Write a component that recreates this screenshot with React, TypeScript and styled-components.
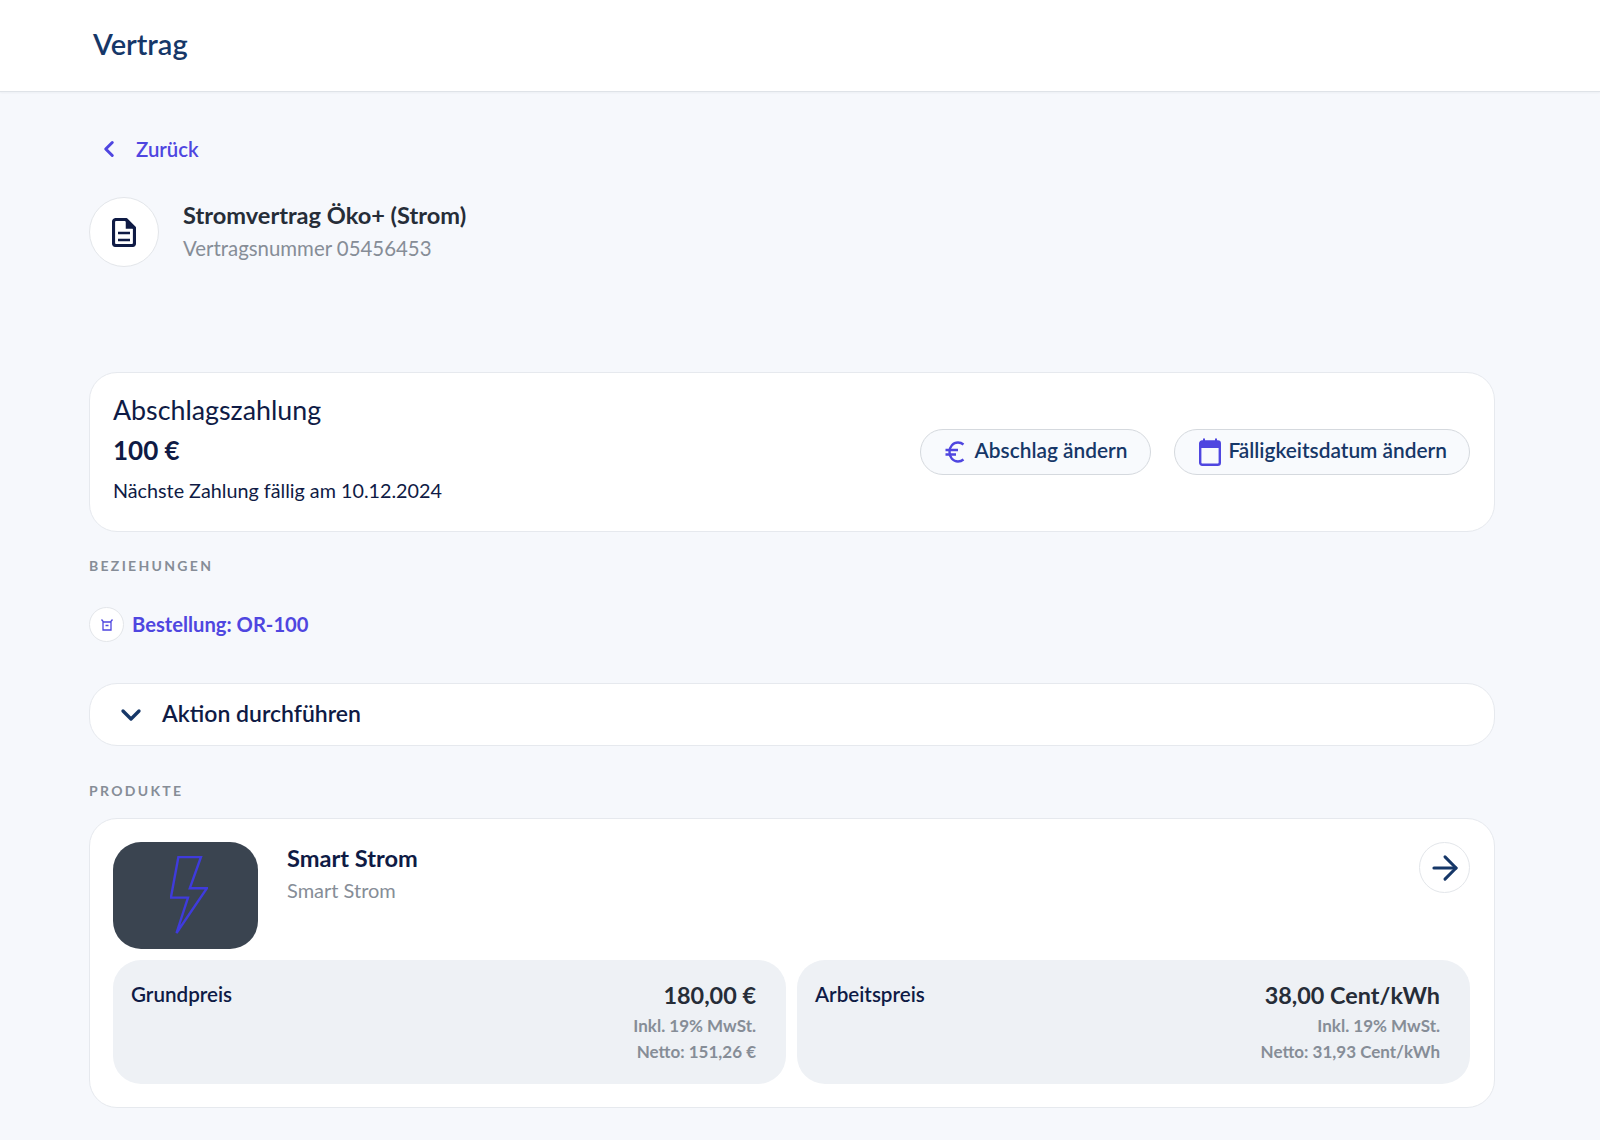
import React from 'react';
import styled, { createGlobalStyle } from 'styled-components';
import { ChevronLeft, ChevronDown, ArrowRight } from 'lucide-react';

const GlobalStyle = createGlobalStyle`
  html, body {
    margin: 0;
    padding: 0;
    background: #f6f8fc;
    font-family: "Lato", "Liberation Sans", sans-serif;
    color: #0f1b45;
  }
`;

const Header = styled.header`
  height: 92px;
  box-sizing: border-box;
  background: #fff;
  border-bottom: 1px solid #dfe3e8;
  box-shadow: 0 1px 2px rgba(30, 50, 80, 0.05);
  padding: 0 0 4px 93px;
  display: flex;
  align-items: center;
`;

const PageTitle = styled.h1`
  margin: 0;
  font-size: 29px;
  font-weight: 600;
  color: #163768;
`;

const Main = styled.main`
  padding: 0 105px 0 89px;
  display: flex;
  flex-direction: column;
`;

const BackLink = styled.a`
  display: flex;
  align-items: center;
  gap: 14px;
  height: 24px;
  margin: 45px 0 0 7px;
  font-size: 20.4px;
  font-weight: 600;
  color: #4f46e0;
`;

const ContractRow = styled.div`
  display: flex;
  gap: 24px;
  margin-top: 36px;
  height: 175px;
`;

const Circle = styled.div<{ $size: number }>`
  width: ${(p) => p.$size}px;
  height: ${(p) => p.$size}px;
  flex: none;
  box-sizing: border-box;
  border-radius: 50%;
  background: #fff;
  border: 1px solid #e3e6ea;
  display: flex;
  align-items: center;
  justify-content: center;
`;

const ContractText = styled.div`
  display: flex;
  flex-direction: column;
  gap: 5px;
  padding-top: 3px;
`;

const ContractName = styled.div`
  font-size: 23.6px;
  font-weight: 700;
  line-height: 30px;
  color: #262d38;
`;

const Muted = styled.div`
  font-size: 20.4px;
  line-height: 26px;
  color: #868d97;
`;

const ProductSub = styled(Muted)`
  font-size: 20px;
`;

const Card = styled.section`
  box-sizing: border-box;
  background: #fff;
  border: 1px solid #e6e9ee;
  border-radius: 28px;
`;

const PaymentCard = styled(Card)`
  height: 160px;
  padding: 0 24px 0 23px;
  display: flex;
  align-items: center;
  justify-content: space-between;
`;

const PaymentInfo = styled.div`
  display: flex;
  flex-direction: column;
  padding-bottom: 7px;
`;

const PaymentTitle = styled.div`
  font-size: 26.8px;
  line-height: 34px;
`;

const PaymentAmount = styled.div`
  font-size: 26px;
  font-weight: 700;
  line-height: 34px;
  margin-top: 6px;
`;

const PaymentDue = styled.div`
  font-size: 19.75px;
  line-height: 26px;
  margin-top: 11px;
`;

const Actions = styled.div`
  display: flex;
  gap: 23px;
`;

const PillButton = styled.button<{ $left: number; $right: number; $gap: number }>`
  height: 46px;
  box-sizing: border-box;
  padding: 0 ${(p) => p.$right}px 5px ${(p) => p.$left}px;
  display: flex;
  align-items: center;
  gap: ${(p) => p.$gap}px;
  background: #f8fafd;
  border: 1px solid #d5d9de;
  border-radius: 23px;
  font-family: inherit;
  font-size: 20.85px;
  font-weight: 600;
  color: #163768;

  svg {
    margin-top: 5px;
  }
`;

const SectionLabel = styled.div<{ $top: number }>`
  margin-top: ${(p) => p.$top}px;
  font-size: 14px;
  line-height: 16px;
  font-weight: 700;
  letter-spacing: 2.3px;
  color: #868d97;
`;

const RelationRow = styled.div`
  display: flex;
  align-items: center;
  gap: 8px;
  margin-top: 33px;
`;

const RelationLink = styled.a`
  font-size: 20.2px;
  font-weight: 700;
  color: #4f46e0;
  padding-bottom: 2px;
`;

const ActionBar = styled(Card)`
  height: 63px;
  margin-top: 41px;
  padding: 0 0 4px 25px;
  display: flex;
  align-items: center;
  gap: 15px;
  font-size: 23px;
  font-weight: 600;
  color: #0f1b45;

  svg {
    margin-top: 4px;
  }
`;

const ProductCard = styled(Card)`
  margin-top: 19px;
  height: 290px;
  padding: 23px 24px 0 23px;
  display: flex;
  flex-direction: column;
  gap: 11px;
`;

const ProductTop = styled.div`
  display: flex;
  gap: 29px;
  height: 107px;
`;

const ProductImage = styled.div`
  width: 145px;
  height: 107px;
  flex: none;
  box-sizing: border-box;
  padding: 0 0 2px 6px;
  border-radius: 28px;
  background: #3a4450;
  display: flex;
  align-items: center;
  justify-content: center;
`;

const ProductText = styled.div`
  flex: 1;
  display: flex;
  flex-direction: column;
  gap: 3px;
`;

const ProductName = styled.div`
  font-size: 23.6px;
  font-weight: 700;
  line-height: 32px;
  color: #0f1b45;
`;

const PriceGrid = styled.div`
  display: grid;
  grid-template-columns: 1fr 1fr;
  gap: 11px;
`;

const PriceBox = styled.div`
  height: 124px;
  box-sizing: border-box;
  border-radius: 28px;
  background: #eef1f5;
  padding: 20px 30px 0 18px;
  display: flex;
  justify-content: space-between;
`;

const PriceLabel = styled.div`
  font-size: 20.6px;
  font-weight: 600;
  line-height: 28px;
  color: #0f1b45;
`;

const PriceValues = styled.div`
  text-align: right;
`;

const PriceValue = styled.div`
  font-size: 23.4px;
  font-weight: 700;
  line-height: 30px;
  margin-bottom: 3px;
  color: #262d38;
`;

const PriceNote = styled.div`
  font-size: 17px;
  font-weight: 700;
  line-height: 26px;
  color: #868d97;
`;

const App: React.FC = () => (
  <>
    <GlobalStyle />
    <Header>
      <PageTitle>Vertrag</PageTitle>
    </Header>
    <Main>
      <BackLink>
        <ChevronLeft size={26} strokeWidth={2.8} color="#4f46e0" />
        Zurück
      </BackLink>
      <ContractRow>
        <Circle $size={70}>
          <svg width="24" height="29" viewBox="0 0 24 29" fill="none" stroke="#0f1b45" strokeWidth="3.2">
            <path d="M4 1.5H14L22.5 10V25A2.5 2.5 0 0 1 20 27.5H4A2.5 2.5 0 0 1 1.5 25V4A2.5 2.5 0 0 1 4 1.5Z" strokeLinejoin="round" />
            <path d="M14.5 2V10H22Z" fill="#0f1b45" strokeWidth="1.5" />
            <path d="M6 15H18M6 22H18" strokeWidth="2.6" />
          </svg>
        </Circle>
        <ContractText>
          <ContractName>Stromvertrag Öko+ (Strom)</ContractName>
          <Muted>Vertragsnummer 05456453</Muted>
        </ContractText>
      </ContractRow>
      <PaymentCard>
        <PaymentInfo>
          <PaymentTitle>Abschlagszahlung</PaymentTitle>
          <PaymentAmount>100 €</PaymentAmount>
          <PaymentDue>Nächste Zahlung fällig am 10.12.2024</PaymentDue>
        </PaymentInfo>
        <Actions>
          <PillButton $left={24} $right={23} $gap={10}>
            <svg width="20" height="24" viewBox="0 0 20 24" fill="none" stroke="#4f46e0" strokeWidth="2.4">
              <path d="M18.5 4.5A9 9.5 0 0 0 13 2.5C8 2.5 4.5 6.5 4.5 12C4.5 17.5 8 21.5 13 21.5A9 9.5 0 0 0 18.5 19.5" />
              <path d="M0.5 10H13M0.5 14.5H11" />
            </svg>
            Abschlag ändern
          </PillButton>
          <PillButton $left={24} $right={22} $gap={7}>
            <svg width="22" height="28" viewBox="0 0 22 28" fill="none">
              <path d="M5 0.5V5M17 0.5V5" stroke="#4f46e0" strokeWidth="2" />
              <rect x="1.2" y="3.5" width="19.6" height="23.3" rx="2" stroke="#4f46e0" strokeWidth="2.4" />
              <rect x="1.2" y="3.5" width="19.6" height="6.5" fill="#4f46e0" />
            </svg>
            Fälligkeitsdatum ändern
          </PillButton>
        </Actions>
      </PaymentCard>
      <SectionLabel $top={26}>BEZIEHUNGEN</SectionLabel>
      <RelationRow>
        <Circle $size={35}>
          <svg width="14" height="14" viewBox="0 0 14 14" fill="none" stroke="#4f46e0" strokeWidth="1.3">
            <path d="M1.5 1.5l2 2.5h7l2-2.5M3 4v8h8V4M5.5 7.5h3" />
          </svg>
        </Circle>
        <RelationLink>Bestellung: OR-100</RelationLink>
      </RelationRow>
      <ActionBar>
        <ChevronDown size={32} strokeWidth={2.5} color="#163768" />
        Aktion durchführen
      </ActionBar>
      <SectionLabel $top={37}>PRODUKTE</SectionLabel>
      <ProductCard>
        <ProductTop>
          <ProductImage>
            <svg width="38" height="78" viewBox="0 0 38 78" fill="none">
              <path d="M8.4 1H31L19.8 32.3H36.8L6.5 77L18 41.6H0.9Z" stroke="#3f3bdc" strokeWidth="2.4" />
            </svg>
          </ProductImage>
          <ProductText>
            <ProductName>Smart Strom</ProductName>
            <ProductSub>Smart Strom</ProductSub>
          </ProductText>
          <Circle $size={51}>
            <ArrowRight size={38} strokeWidth={1.9} color="#163768" />
          </Circle>
        </ProductTop>
        <PriceGrid>
          <PriceBox>
            <PriceLabel>Grundpreis</PriceLabel>
            <PriceValues>
              <PriceValue>180,00 €</PriceValue>
              <PriceNote>Inkl. 19% MwSt.</PriceNote>
              <PriceNote>Netto: 151,26 €</PriceNote>
            </PriceValues>
          </PriceBox>
          <PriceBox>
            <PriceLabel>Arbeitspreis</PriceLabel>
            <PriceValues>
              <PriceValue>38,00 Cent/kWh</PriceValue>
              <PriceNote>Inkl. 19% MwSt.</PriceNote>
              <PriceNote>Netto: 31,93 Cent/kWh</PriceNote>
            </PriceValues>
          </PriceBox>
        </PriceGrid>
      </ProductCard>
    </Main>
  </>
);

export default App;
